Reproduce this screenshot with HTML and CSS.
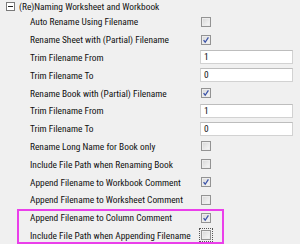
FILE: index.html
```html
<html>
<head>
  <title>Import Options</title>
  <link rel="stylesheet" href="styles.css">
</head>
<body>
<div class="tree">

  <!-- заголовок группы -->
  <div class="group-head">
    <svg class="fold" width="9" height="9" viewBox="0 0 9 9">
      <rect x="0.5" y="0.5" width="8" height="8" fill="#fff" stroke="#7a7a7a"/>
      <path d="M2 4.5h5" stroke="#222" stroke-width="1"/>
    </svg>
    <span>(Re)Naming Worksheet and Workbook</span>
  </div>

  <div class="row"><span class="label">Auto Rename Using Filename</span><span class="value"><span class="check"></span></span></div>
  <div class="row"><span class="label">Rename Sheet with (Partial) Filename</span><span class="value"><span class="check on"><svg viewBox="0 0 10 10"><path d="M2 5.2l2 2.6 4-6"/></svg></span></span></div>
  <div class="row"><span class="label">Trim Filename From</span><span class="value"><span class="field">1</span></span></div>
  <div class="row"><span class="label">Trim Filename To</span><span class="value"><span class="field">0</span></span></div>
  <div class="row"><span class="label">Rename Book with (Partial) Filename</span><span class="value"><span class="check on"><svg viewBox="0 0 10 10"><path d="M2 5.2l2 2.6 4-6"/></svg></span></span></div>
  <div class="row"><span class="label">Trim Filename From</span><span class="value"><span class="field">1</span></span></div>
  <div class="row"><span class="label">Trim Filename To</span><span class="value"><span class="field">0</span></span></div>
  <div class="row"><span class="label">Rename Long Name for Book only</span><span class="value"><span class="check"></span></span></div>
  <div class="row"><span class="label">Include File Path when Renaming Book</span><span class="value"><span class="check"></span></span></div>
  <div class="row"><span class="label">Append Filename to Workbook Comment</span><span class="value"><span class="check on"><svg viewBox="0 0 10 10"><path d="M2 5.2l2 2.6 4-6"/></svg></span></span></div>
  <div class="row"><span class="label">Append Filename to Worksheet Comment</span><span class="value"><span class="check"></span></span></div>

  <!-- выделенные строки -->
  <div class="pick">
    <div class="row"><span class="label">Append Filename to Column Comment</span><span class="value"><span class="check on"><svg viewBox="0 0 10 10"><path d="M2 5.2l2 2.6 4-6"/></svg></span></span></div>
    <div class="row"><span class="label">Include File Path when Appending Filename</span><span class="value"><span class="check focus"></span></span></div>
  </div>

</div>
</body>
</html>
```
FILE: styles.css
```css
body {
  margin: 0;
  padding: 0;
  background-color: #f0f0f0;
  color: #111;
  font-family: Roboto, "Liberation Sans", sans-serif;
  font-stretch: condensed;
  font-size: 9.4px;
  overflow: hidden;
}

.group-head {
  height: 13px;
  display: flex;
  align-items: center;
  gap: 4px;
  padding-left: 6px;
  white-space: nowrap;
}

.fold {
  display: block;
}

.row {
  height: 17.8px;
  display: grid;
  grid-template-columns: 200px 93px;
  align-items: center;
  white-space: nowrap;
}

.label {
  padding-left: 30px;
  overflow: hidden;
}

.value {
  display: flex;
  align-items: center;
}

/* чекбокс */
.check {
  width: 10px;
  height: 10px;
  margin-left: 1px;
  box-sizing: border-box;
  border: 1px solid #939393;
  background: linear-gradient(135deg, #d6d6d6, #f9f9f9);
  box-shadow: inset 0 0 0 1px #ececec;
  display: block;
}

.check svg {
  display: block;
  width: 8px;
  height: 8px;
  fill: none;
  stroke: #3a52a8;
  stroke-width: 1.6;
}

.check.focus {
  outline: 1px dotted #555;
  outline-offset: 1px;
}

/* поле ввода */
.field {
  width: 93px;
  height: 14px;
  box-sizing: border-box;
  border: 1px solid #d2d2d2;
  border-top-color: #bdbdbd;
  background: #fff;
  padding-left: 3px;
  line-height: 12px;
  display: block;
}

.pick {
  position: relative;
}

.pick::after {
  content: "";
  position: absolute;
  left: 17px;
  top: 0;
  width: 207px;
  height: 35px;
  box-sizing: border-box;
  border: 2px solid #ea3fea;
}
```
